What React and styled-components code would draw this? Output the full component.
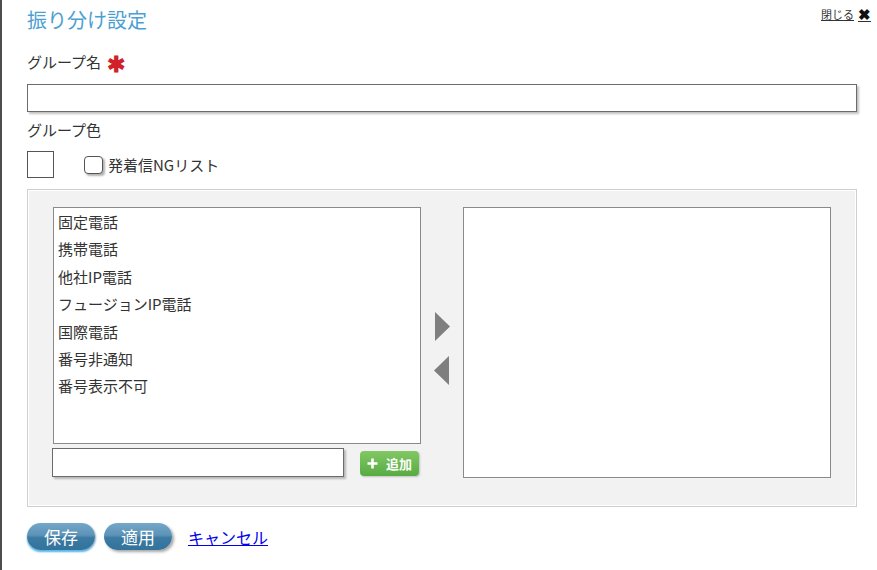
import React from 'react';
import styled, { createGlobalStyle } from 'styled-components';

const GlobalStyle = createGlobalStyle`
  html, body {
    margin: 0;
    padding: 0;
    background: #fff;
  }
  body {
    font-family: "Noto Sans CJK JP", "Noto Sans", sans-serif;
    color: #333;
  }
`;

const Dialog = styled.div`
  box-sizing: border-box;
  width: 877px;
  height: 570px;
  border-left: 2px solid #4d4d4d;
  padding: 6px 20px 0 25px;
  position: relative;
`;

const Title = styled.h1`
  margin: 0;
  font-size: 20px;
  line-height: 28px;
  font-weight: normal;
  color: #4d9fd2;
`;

const CloseLink = styled.a`
  position: absolute;
  top: 3px;
  right: 6px;
  display: flex;
  align-items: center;
  gap: 4px;
  font-size: 11px;
  color: #333;
  text-decoration: underline;
  cursor: pointer;
`;

const CloseX = styled.span`
  font-size: 15px;
  font-weight: bold;
  color: #111;
  text-decoration: none;
`;

const Label = styled.div`
  margin-top: ${p => p.$top}px;
  font-size: 15px;
  line-height: 20px;
  display: flex;
  align-items: center;
  gap: 6px;
`;

const Required = styled.span`
  color: #d0202a;
  font-size: 22px;
  font-weight: bold;
  line-height: 20px;
  height: 20px;
`;

const TextInput = styled.input`
  display: block;
  box-sizing: border-box;
  width: ${p => p.$width};
  height: ${p => p.$height}px;
  margin-top: ${p => p.$top || 0}px;
  border: 1px solid #6b6b6b;
  background: #fff;
  box-shadow: 2px 2px 2px rgba(0, 0, 0, 0.25);
  padding: 0 4px;
  font-family: inherit;
  font-size: 14px;
  outline: none;
`;

const ColorRow = styled.div`
  margin-top: 11px;
  display: flex;
  align-items: center;
  height: 27px;
`;

const ColorSwatch = styled.div`
  box-sizing: border-box;
  width: 27px;
  height: 27px;
  border: 1px solid #555;
  background: #fff;
`;

const CheckLabel = styled.label`
  margin-left: 30px;
  display: flex;
  align-items: center;
  gap: 5px;
  font-size: 15px;
`;

const CheckBox = styled.span`
  box-sizing: border-box;
  width: 19px;
  height: 18px;
  border: 1px solid #555;
  border-radius: 4px;
  background: #fff;
  box-shadow: 2px 2px 2px rgba(0, 0, 0, 0.3);
`;

const Panel = styled.div`
  box-sizing: border-box;
  margin-top: 11px;
  height: 318px;
  border: 1px solid #cfcfcf;
  box-shadow: inset 0 0 0 1px #fff;
  background: #f2f2f2;
  padding: 17px 25px 0 25px;
  display: flex;
  align-items: flex-start;
`;

const Column = styled.div`
  display: flex;
  flex-direction: column;
  gap: 4px;
`;

const ListBox = styled.ul`
  box-sizing: border-box;
  margin: 0;
  padding: 0 4px;
  list-style: none;
  width: 368px;
  height: ${p => p.$height}px;
  border: 1px solid #8a8a8a;
  background: #fff;
`;

const ListItem = styled.li`
  font-size: 15px;
  line-height: 27.4px;
  color: #333;
`;

const AddRow = styled.div`
  display: flex;
  align-items: center;
  gap: 16px;
  margin-left: -1px;
`;

const AddButton = styled.button`
  box-sizing: border-box;
  width: 59px;
  height: 25px;
  margin-top: 2px;
  border: none;
  border-radius: 4px;
  background: linear-gradient(#82c865, #57ab43);
  box-shadow: 1px 1px 2px rgba(0, 0, 0, 0.2);
  color: #fff;
  font-family: inherit;
  font-size: 13px;
  font-weight: bold;
  display: flex;
  align-items: center;
  justify-content: center;
  gap: 8px;
  padding: 0;
`;

const Arrows = styled.div`
  width: 42px;
  align-self: stretch;
  display: flex;
  flex-direction: column;
  align-items: center;
  gap: 15px;
  padding-top: 105px;
`;

const FooterRow = styled.div`
  margin-top: 16px;
  display: flex;
  align-items: center;
  gap: 9px;
`;

const PillButton = styled.button`
  box-sizing: border-box;
  width: 68px;
  height: 27px;
  border: none;
  border-radius: 14px;
  background: linear-gradient(#74a7c8 0%, #5c93b8 45%, #3b7aa2 55%, #33739c 100%);
  box-shadow: ${p => (p.$focus ? '0 2px 2px #5ab8ec, 1px 1px 2px rgba(0,0,0,.3)' : '2px 2px 3px rgba(0, 0, 0, 0.35)')};
  color: #fff;
  font-family: inherit;
  font-size: 17px;
  padding: 0;
`;

const CancelLink = styled.a`
  margin-left: 7px;
  font-size: 16px;
  color: #0000ee;
  text-decoration: underline;
  cursor: pointer;
`;

const Triangle = ({ dir }) => (
  <svg width="16" height="29" viewBox="0 0 16 29">
    <polygon points={dir === 'right' ? '1,0 16,14.5 1,29' : '15,0 0,14.5 15,29'} fill="#7f7f7f" />
  </svg>
);

const PlusIcon = () => (
  <svg width="11" height="11" viewBox="0 0 11 11">
    <path d="M5.5 0.5v10M0.5 5.5h10" stroke="#fff" strokeWidth="2.6" />
  </svg>
);

const types = ['固定電話', '携帯電話', '他社IP電話', 'フュージョンIP電話', '国際電話', '番号非通知', '番号表示不可'];

export default function App() {
  return (
    <>
      <GlobalStyle />
      <Dialog>
        <CloseLink>
          閉じる <CloseX>✖</CloseX>
        </CloseLink>
        <Title>振り分け設定</Title>

        <Label $top={18}>
          グループ名 <Required>✱</Required>
        </Label>
        <TextInput $width="100%" $height={28} $top={12} />

        <Label $top={8}>グループ色</Label>
        <ColorRow>
          <ColorSwatch />
          <CheckLabel>
            <CheckBox />
            発着信NGリスト
          </CheckLabel>
        </ColorRow>

        <Panel>
          <Column>
            <ListBox $height={237}>
              {types.map(t => (
                <ListItem key={t}>{t}</ListItem>
              ))}
            </ListBox>
            <AddRow>
              <TextInput $width="292px" $height={29} />
              <AddButton>
                <PlusIcon />
                追加
              </AddButton>
            </AddRow>
          </Column>
          <Arrows>
            <Triangle dir="right" />
            <Triangle dir="left" />
          </Arrows>
          <ListBox $height={271} />
        </Panel>

        <FooterRow>
          <PillButton $focus>保存</PillButton>
          <PillButton>適用</PillButton>
          <CancelLink>キャンセル</CancelLink>
        </FooterRow>
      </Dialog>
    </>
  );
}
